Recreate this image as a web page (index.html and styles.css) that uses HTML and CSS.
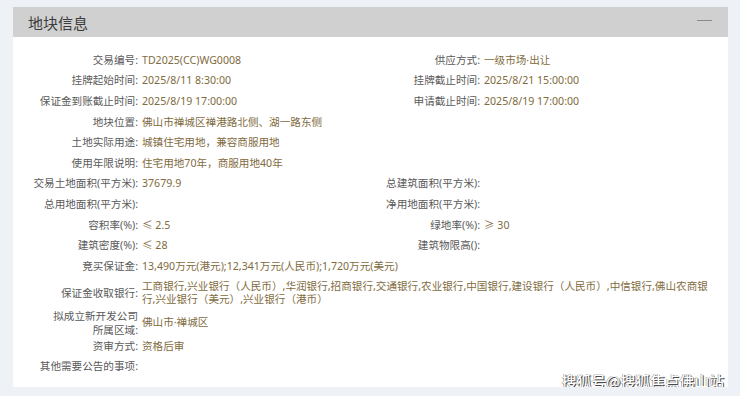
FILE: index.html
```
<!DOCTYPE html>
<html lang="zh-CN">
<head>
<meta charset="utf-8">
<link rel="stylesheet" href="styles.css">
</head>
<body>
<div class="card">
  <div class="card-head">
    <span class="title">地块信息</span>
    <span class="collapse"></span>
  </div>
  <div class="card-body">
    <div class="field"><span class="label">交易编号:</span><span class="value">TD2025(CC)WG0008</span></div>
    <div class="field"><span class="label">供应方式:</span><span class="value">一级市场·出让</span></div>
    <div class="field"><span class="label">挂牌起始时间:</span><span class="value">2025/8/11 8:30:00</span></div>
    <div class="field"><span class="label">挂牌截止时间:</span><span class="value">2025/8/21 15:00:00</span></div>
    <div class="field"><span class="label">保证金到账截止时间:</span><span class="value">2025/8/19 17:00:00</span></div>
    <div class="field"><span class="label">申请截止时间:</span><span class="value">2025/8/19 17:00:00</span></div>
    <div class="field wide"><span class="label">地块位置:</span><span class="value">佛山市禅城区禅港路北侧、湖一路东侧</span></div>
    <div class="field wide"><span class="label">土地实际用途:</span><span class="value">城镇住宅用地，兼容商服用地</span></div>
    <div class="field wide"><span class="label">使用年限说明:</span><span class="value">住宅用地70年，商服用地40年</span></div>
    <div class="field"><span class="label">交易土地面积(平方米):</span><span class="value">37679.9</span></div>
    <div class="field"><span class="label">总建筑面积(平方米):</span><span class="value"></span></div>
    <div class="field"><span class="label">总用地面积(平方米):</span><span class="value"></span></div>
    <div class="field"><span class="label">净用地面积(平方米):</span><span class="value"></span></div>
    <div class="field"><span class="label">容积率(%):</span><span class="value">≤ 2.5</span></div>
    <div class="field"><span class="label">绿地率(%):</span><span class="value">≥ 30</span></div>
    <div class="field"><span class="label">建筑密度(%):</span><span class="value">≤ 28</span></div>
    <div class="field"><span class="label">建筑物限高():</span><span class="value"></span></div>
    <div class="field wide"><span class="label">竞买保证金:</span><span class="value">13,490万元(港元);12,341万元(人民币);1,720万元(美元)</span></div>
    <div class="field wide"><span class="label">保证金收取银行:</span><span class="value">工商银行,兴业银行（人民币）,华润银行,招商银行,交通银行,农业银行,中国银行,建设银行（人民币）,中信银行,佛山农商银行,兴业银行（美元）,兴业银行（港币）</span></div>
    <div class="field wide"><span class="label tight">拟成立新开发公司<br>所属区域:</span><span class="value">佛山市·禅城区</span></div>
    <div class="field wide"><span class="label">资审方式:</span><span class="value">资格后审</span></div>
    <div class="field wide"><span class="label">其他需要公告的事项:</span><span class="value"></span></div>
  </div>
  <div class="watermark">搜狐号@搜狐焦点佛山站</div>
</div>
</body>
</html>
```
FILE: styles.css
```
html, body {
  margin: 0;
  padding: 0;
  background: #eef1f5;
  font-family: "Noto Sans", "Noto Sans CJK SC", sans-serif;
}

.card {
  position: relative;
  margin: 7px 0 0 13px;
  width: 715px;
  height: 380px;
  background: #ffffff;
}

.card-head {
  height: 30px;
  background: #d0d0d0;
  display: flex;
  align-items: center;
  justify-content: space-between;
  padding: 0 16px 0 15px;
}

.title {
  font-family: "Noto Sans CJK SC", sans-serif;
  font-size: 15px;
  color: #3d3d3d;
  line-height: 1;
}

.collapse {
  width: 15px;
  height: 1.5px;
  background: #8a8a8a;
  margin-top: -3px;
}

.card-body {
  display: grid;
  grid-template-columns: 342px 1fr;
  padding: 13px 16px 0 0;
}

.field {
  display: flex;
  align-items: center;
  padding: 3.8px 0;
  font-size: 10.6px;
  line-height: 13px;
}

.field.wide {
  grid-column: 1 / -1;
}

.label {
  width: 125px;
  flex-shrink: 0;
  text-align: right;
  color: #5a5a5a;
}

.label.tight {
  line-height: 14px;
  margin: -5px 0;
}

.value {
  margin-left: 4px;
  color: #7f6b3e;
}

.watermark {
  position: absolute;
  right: 4px;
  bottom: -4px;
  font-family: "Noto Sans CJK SC", sans-serif;
  font-size: 14.8px;
  font-weight: 500;
  line-height: 20px;
  color: #ffffff;
  text-shadow: 1px 1px 0 #4a4a4a, -0.5px 0 0 #888, 0 -0.5px 0 #888;
}
```
